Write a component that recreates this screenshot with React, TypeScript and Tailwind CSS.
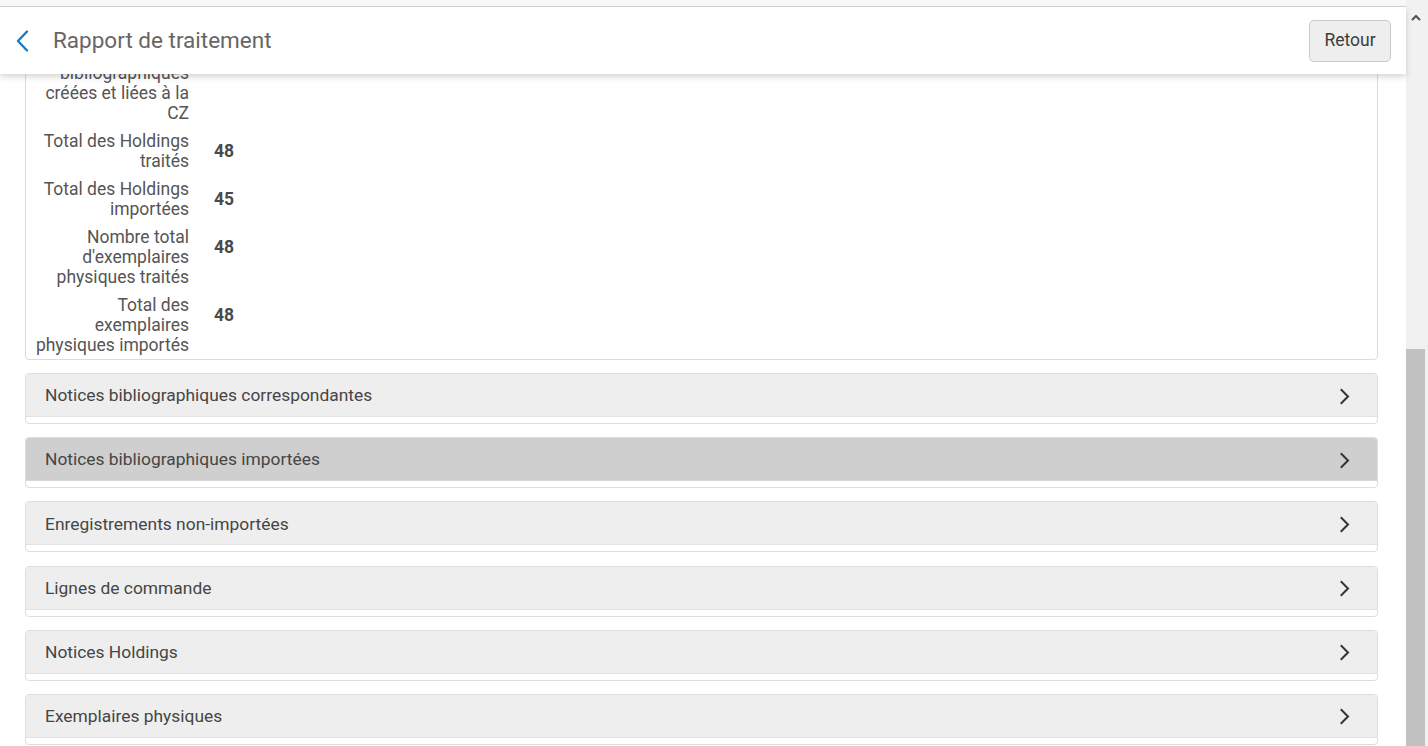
import React from "react";

// Report rows (first one is scrolled up under the header)
const STATS = [
  { label: "Total des notices bibliographiques créées et liées à la CZ", value: "3" },
  { label: "Total des Holdings traités", value: "48" },
  { label: "Total des Holdings importées", value: "45" },
  { label: "Nombre total d'exemplaires physiques traités", value: "48" },
  { label: "Total des exemplaires physiques importés", value: "48" },
];

const SECTIONS = [
  { title: "Notices bibliographiques correspondantes", hover: false },
  { title: "Notices bibliographiques importées", hover: true },
  { title: "Enregistrements non-importées", hover: false },
  { title: "Lignes de commande", hover: false },
  { title: "Notices Holdings", hover: false },
  { title: "Exemplaires physiques", hover: false },
];

function ChevronRight() {
  return (
    <svg width="12" height="17" viewBox="0 0 12 17" fill="none" className="shrink-0">
      <path d="M2.5 2 L9 8.5 L2.5 15" stroke="#333" strokeWidth="2" strokeLinecap="square" />
    </svg>
  );
}

export default function App() {
  return (
    <div className="flex h-[746px] w-[1428px] overflow-hidden bg-white font-['Roboto','Liberation_Sans',sans-serif]">
      <div className="flex min-w-0 flex-1 flex-col">
        {/* top strip */}
        <div className="h-[7px] shrink-0 border-b border-[#d4d4d4] bg-[#f8f8f8]" />

        {/* ─── HEADER ─── */}
        <div className="relative z-10 flex h-[67px] shrink-0 items-center bg-white pl-[14px] pr-[15px] shadow-[0_3px_6px_rgba(0,0,0,0.16)]">
          <svg width="18" height="24" viewBox="0 0 18 24" fill="none" className="shrink-0">
            <path d="M13 2.5 L4 12 L13 21.5" stroke="#1d7ac0" strokeWidth="2.4" strokeLinecap="round" strokeLinejoin="round" />
          </svg>
          <h1 className="ml-[21px] text-[22.5px] leading-none font-normal text-[#666666]">Rapport de traitement</h1>
          <button className="ml-auto h-[42px] w-[82px] rounded-[5px] border border-[#c9c9c9] bg-[#eeeeee] text-[17.5px] text-[#3c3c3c]">
            Retour
          </button>
        </div>

        {/* ─── SCROLLED CONTENT ─── */}
        <div className="flex-1 overflow-hidden">
          <div className="-mt-[36px] pl-[25px] pr-[28px]">
            {/* stats table */}
            <div className="rounded-[4px] border border-[#dcdcdc]">
              {STATS.map((row) => (
                <div key={row.label} className="flex items-start">
                  <div className="w-[163px] shrink-0 py-1 pl-[5px] text-right text-[17.5px] leading-[20px] text-[#555555]">
                    {row.label}
                  </div>
                  <div className="pt-[14px] pl-[25px] text-[17.5px] leading-[20px] font-bold text-[#4a4a4a]">
                    {row.value}
                  </div>
                </div>
              ))}
            </div>

            {/* collapsible sections */}
            <div className="mt-[13px] flex flex-col gap-[13.2px]">
              {SECTIONS.map((s) => (
                <div key={s.title} className="overflow-hidden rounded-[4px] border border-[#dddddd] bg-white pb-[6px]">
                  <div
                    className={
                      s.hover
                        ? "flex h-[43px] items-center justify-between border-b border-[#d8d8d8] bg-[#cfcfcf] pt-[2px] pl-[19px] pr-[26px]"
                        : "flex h-[43px] items-center justify-between border-b border-[#e2e2e2] bg-[#eeeeee] pt-[2px] pl-[19px] pr-[26px]"
                    }
                  >
                    <span className="text-[17.4px] leading-none text-[#454545]">{s.title}</span>
                    <ChevronRight />
                  </div>
                </div>
              ))}
            </div>
          </div>
        </div>
      </div>

      {/* ─── SCROLLBAR ─── */}
      <div className="flex w-[22px] shrink-0 flex-col bg-[#f1f1f1]">
        <div className="flex h-[30px] items-center justify-center pt-[4px] pr-[3px]">
          <svg width="10" height="7" viewBox="0 0 10 7">
            <path d="M1 6 L5 2 L9 6" stroke="#505050" strokeWidth="2" fill="none" />
          </svg>
        </div>
        <div className="flex-1" style={{ maxHeight: 319 }} />
        <div className="flex flex-1 pr-[3px]">
          <div className="w-full bg-[#c1c1c1]" />
        </div>
      </div>
    </div>
  );
}
